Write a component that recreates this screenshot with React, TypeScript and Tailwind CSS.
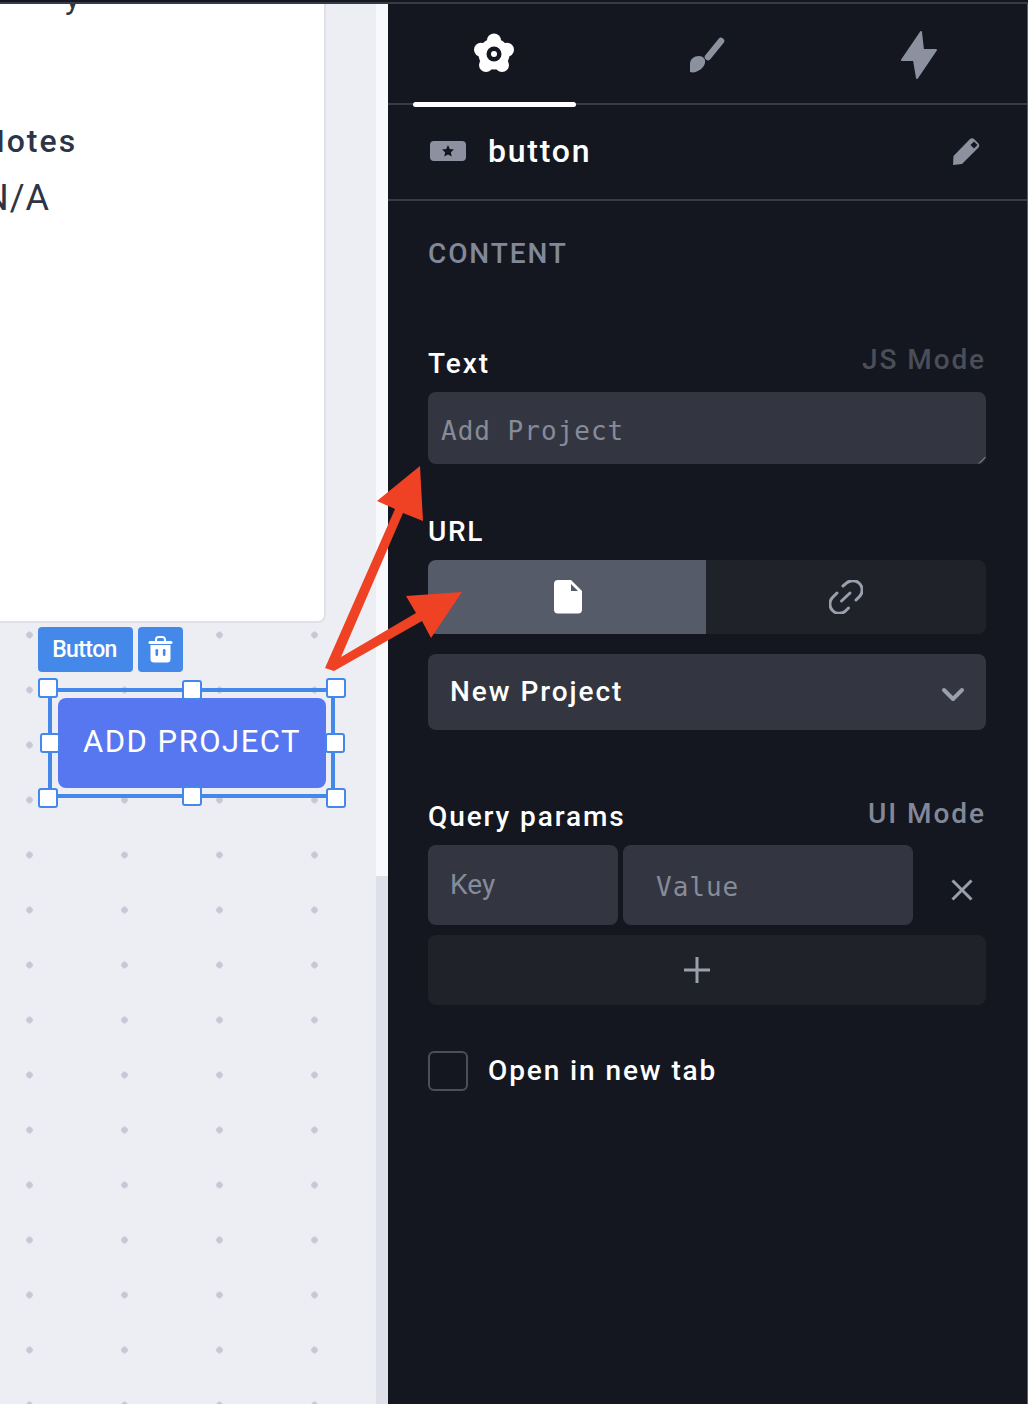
export default function App() {
  const handle = "absolute w-5 h-5 bg-white border-2 border-[#4489e9] rounded-[3px]";
  return (
    <div className="relative w-[1028px] h-[1404px] overflow-hidden bg-[#edeef4] font-['Roboto',sans-serif]">
      <div className="h-1 bg-[#14171f] border-b-2 border-[#373b45]" />
      <div className="flex h-[1400px]">
        {/* Canvas column */}
        <div className="relative w-[376px] h-full overflow-hidden bg-[#edeef4] bg-[radial-gradient(circle,#c6c9d5_3px,transparent_3.5px)] bg-size-[95px_55px] bg-position-[-18px_-1.5px]">
          <div className="relative w-[326px] h-[619px] bg-white border-r-2 border-b-2 border-[#dfe0e8] rounded-br-lg overflow-hidden">
            <div className="absolute left-[65px] -top-[21px] text-[32px] leading-[30px] text-[#2e3445]">y</div>
            <div className="absolute -left-[18px] top-[119px] text-[32px] leading-9 tracking-[2px] font-medium text-[#2e3445]">Notes</div>
            <div className="absolute -left-[17px] top-[174px] text-[36px] leading-10 tracking-[1px] text-[#2e3445]">N/A</div>
          </div>

          {/* Widget badge */}
          <div className="absolute left-[38px] top-[623px] flex gap-[5px]">
            <div className="w-[95px] h-[45px] flex items-center justify-center rounded bg-[#4489e9] text-white text-[23px] font-medium tracking-[-0.6px] pr-[2px] pt-[1px]">Button</div>
            <div className="w-[45px] h-[45px] flex items-center justify-center rounded bg-[#4489e9]">
              <svg width="25" height="27" viewBox="0 0 25 27" fill="none">
                <path d="M8 5V3.5A2.5 2.5 0 0 1 10.5 1h4A2.5 2.5 0 0 1 17 3.5V5" stroke="white" strokeWidth="2" />
                <rect x="0.5" y="5" width="24" height="3" rx="1.5" fill="white" />
                <path d="M2.5 9h20v14a3.5 3.5 0 0 1-3.5 3.5H6A3.5 3.5 0 0 1 2.5 23Z" fill="white" />
                <rect x="7.5" y="13" width="2.6" height="7" rx="1.3" fill="#4489e9" />
                <rect x="14.9" y="13" width="2.6" height="7" rx="1.3" fill="#4489e9" />
              </svg>
            </div>
          </div>

          {/* Selected button */}
          <div className="absolute left-[48px] top-[684px] w-[287px] h-[110px] border-4 border-[#4489e9] pl-1.5 pr-[5px] py-1.5">
            <div className="w-full h-full flex items-center justify-center rounded-lg bg-[#5677f0] text-white text-[31px] tracking-[1.5px] pb-[2px]">ADD PROJECT</div>
          </div>
          <div className={`${handle} left-[38px] top-[674px]`} />
          <div className={`${handle} left-[326px] top-[674px]`} />
          <div className={`${handle} left-[38px] top-[784px]`} />
          <div className={`${handle} left-[326px] top-[784px]`} />
          <div className={`${handle} left-[182px] top-[676px]`} />
          <div className={`${handle} left-[182px] top-[782px]`} />
          <div className={`${handle} left-[40px] top-[729px]`} />
          <div className={`${handle} left-[325px] top-[729px]`} />
        </div>

        {/* Scrollbar strip */}
        <div className="w-3 h-full bg-[#dde0e9]">
          <div className="h-[872px] bg-[#f8f9fd]" />
        </div>

        {/* Right panel */}
        <div className="w-[640px] h-full bg-[#14171f] border-r border-[#5c606b]">
          <div className="relative grid grid-cols-3 h-[101px] border-b-2 border-[#373b45]">
            <div className="flex items-center justify-center pr-[1px]">
              <svg width="42" height="42" viewBox="0 0 42 42">
                <g fill="white">
                  <circle cx="21" cy="7.5" r="7" />
                  <circle cx="34" cy="16.8" r="7" />
                  <circle cx="29" cy="32" r="7" />
                  <circle cx="13" cy="32" r="7" />
                  <circle cx="8" cy="16.8" r="7" />
                  <circle cx="21" cy="21" r="15.5" />
                </g>
                <circle cx="21" cy="21" r="7.5" fill="#14171f" />
                <circle cx="21" cy="21" r="3" fill="white" />
              </svg>
            </div>
            <div className="flex items-center justify-center pt-[2px] pr-[1px]">
              <svg width="36" height="36" viewBox="0 0 36 36" fill="none">
                <path d="M32 4L19 20" stroke="#8c91a0" strokeWidth="6.5" strokeLinecap="round" />
                <path d="M1 35V27C1 22 5 19 10 19C14 19 17 22 16 26C15 31 9 35 4 35.5Z" fill="#8c91a0" />
              </svg>
            </div>
            <div className="flex items-center justify-center pt-[2px] pr-[3px]">
              <svg width="36" height="48" viewBox="0 0 36 48" fill="#8c91a0" stroke="#8c91a0" strokeWidth="2" strokeLinejoin="round">
                <path d="M20 1L1 29H13L16 47L35 19H22Z" />
              </svg>
            </div>
            <div className="absolute left-[25px] top-[98px] w-[163px] h-[5px] rounded-full bg-white" />
          </div>

          <div className="flex items-center h-[96px] border-b-2 border-[#373b45] pl-[42px] pr-[47px] pb-[3px]">
            <svg width="36" height="20" viewBox="0 0 36 20">
              <rect width="36" height="20" rx="4" fill="#8c91a0" />
              <path d="M18 4l1.8 3.9 4.2.5-3.1 2.9.8 4.2-3.7-2.1-3.7 2.1.8-4.2-3.1-2.9 4.2-.5Z" fill="#14171f" />
            </svg>
            <span className="ml-[22px] text-[32px] leading-9 tracking-[1.75px] font-medium text-white">button</span>
            <svg className="ml-auto" width="28" height="28" viewBox="0 0 28 28">
              <path d="M1.5 19L17.5 2.5Q20 0 22.5 2.5L26 6Q28.5 8.5 26 11L10 27L1 28Z" fill="#8c91a0" />
              <rect x="19.5" y="5.5" width="5" height="5" transform="rotate(45 22 8)" fill="#14171f" />
            </svg>
          </div>

          <div className="pl-10 pr-[41px]">
            <div className="mt-[35px] h-9 flex items-center text-[28px] tracking-[1.9px] font-medium text-[#82889a] leading-none">CONTENT</div>

            <div className="mt-[73px] h-9 flex items-center justify-between pt-[2px]">
              <span className="text-[28px] tracking-[2px] font-medium text-white leading-none">Text</span>
              <span className="text-[28px] tracking-[1.9px] font-medium text-[#4a4e5a] leading-none mb-2">JS Mode</span>
            </div>
            <div className="relative mt-[11px] h-[72px] flex items-center rounded-lg bg-[#333640] pl-[13px] pt-[6px] font-['DejaVu_Sans_Mono',monospace] text-[26px] tracking-[1px] text-[#868b9a]">
              Add Project
              <svg className="absolute right-0 bottom-0" width="8" height="8" viewBox="0 0 8 8" fill="none" stroke="#9a9fad" strokeWidth="1">
                <path d="M7.5 1L1 7.5" />
              </svg>
            </div>

            <div className="mt-[50px] h-9 flex items-center text-[28px] tracking-[1.6px] font-medium text-white leading-none">URL</div>
            <div className="mt-[10px] h-[74px] flex rounded-lg overflow-hidden">
              <div className="w-[278px] flex items-center justify-center bg-[#565b69] pl-[2px]">
                <svg width="28" height="34" viewBox="0 0 28 34">
                  <path d="M4 0H17L28 11V29.5A4 4 0 0 1 24 33.5H4A4 4 0 0 1 0 29.5V4A4 4 0 0 1 4 0Z" fill="white" />
                  <path d="M17 4L24 11H17Z" fill="#565b69" />
                </svg>
              </div>
              <div className="flex-1 flex items-center justify-center bg-[#1f2229]">
                <svg width="34" height="34" viewBox="0 0 34 34" fill="none" stroke="#9a9fad" strokeWidth="3" strokeLinecap="round">
                  <path d="M14 6L17 3.5A9 9 0 0 1 30.5 16.5L27 20" />
                  <path d="M19.5 28L17 30.5A9 9 0 0 1 3.5 17.5L8 13" />
                  <path d="M12.5 21L21 13" />
                </svg>
              </div>
            </div>
            <div className="mt-5 h-[76px] flex items-center justify-between rounded-lg bg-[#333640] pl-[22px] pr-[21px]">
              <span className="text-[28px] tracking-[1.95px] font-medium text-white leading-none">New Project</span>
              <svg className="mt-1" width="24" height="15" viewBox="0 0 24 15" fill="none" stroke="#9a9fad" strokeWidth="4" strokeLinecap="round" strokeLinejoin="round">
                <path d="M3 3L12 12L21 3" />
              </svg>
            </div>

            <div className="mt-[68px] h-9 flex items-center justify-between pt-[2px]">
              <span className="text-[28px] tracking-[1.9px] font-medium text-white leading-none">Query params</span>
              <span className="text-[28px] tracking-[1.95px] font-medium text-[#82889a] leading-none mb-[6px]">UI Mode</span>
            </div>
            <div className="mt-[11px] flex items-center">
              <div className="w-[190px] h-20 rounded-lg bg-[#333640] pl-[22px] flex items-center text-[28px] text-[#868b9a] leading-none">Key</div>
              <div className="ml-[5px] w-[290px] h-20 rounded-lg bg-[#333640] pl-[33px] pt-1 flex items-center font-['DejaVu_Sans_Mono',monospace] text-[26px] tracking-[1px] text-[#868b9a]">Value</div>
              <svg className="ml-[38px] mt-[10px]" width="22" height="22" viewBox="0 0 22 22" fill="none" stroke="#9a9fad" strokeWidth="3">
                <path d="M1.5 1.5L20.5 20.5M20.5 1.5L1.5 20.5" />
              </svg>
            </div>
            <div className="mt-[10px] h-[70px] flex items-center justify-center rounded-lg bg-[#1f2229] pr-[20px]">
              <svg width="28" height="28" viewBox="0 0 28 28" fill="none" stroke="#9a9fad" strokeWidth="3">
                <path d="M14 1V27M1 14H27" />
              </svg>
            </div>
            <div className="mt-[46px] flex items-center">
              <div className="w-10 h-10 rounded-md border-2 border-[#4b4f5b]" />
              <span className="ml-5 text-[28px] tracking-[1.9px] font-medium text-white leading-none">Open in new tab</span>
            </div>
          </div>
        </div>
      </div>

      {/* Annotation arrows */}
      <svg className="absolute left-0 top-0 pointer-events-none" width="1028" height="1404" viewBox="0 0 1028 1404">
        <polygon points="377,501 420,466 423,521 403,513 341,657 416,613 406,596 462,592 431,638 422,621 334,671 325,668 395,509" fill="#ef4123" />
      </svg>
    </div>
  );
}
